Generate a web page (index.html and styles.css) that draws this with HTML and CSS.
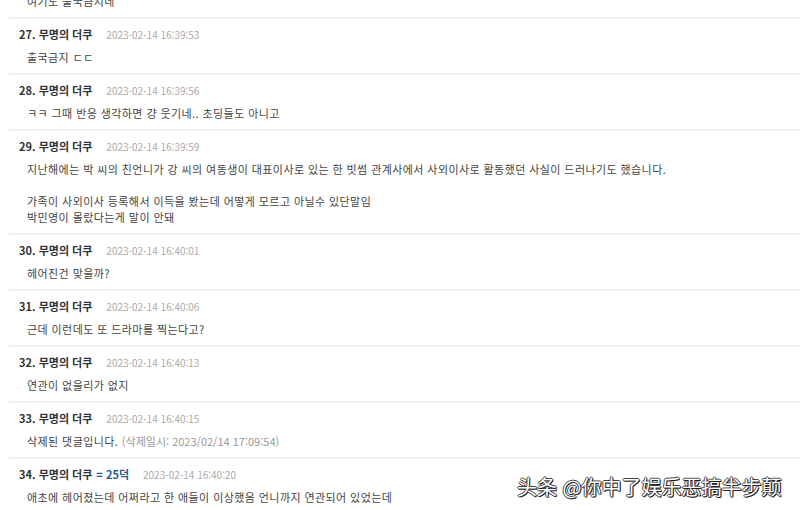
FILE: index.html
```html
<!DOCTYPE html>
<html lang="ko">

<head>
    <meta charset="UTF-8">
    <meta name="viewport" content="width=device-width, initial-scale=1.0">
    <title>댓글</title>
    <link rel="stylesheet" href="styles.css">
</head>

<body>
    <ul class="comments">
        <li class="comment first">
            <p class="text">여기도 출국금지네</p>
        </li>
        <li class="comment">
            <div class="meta"><span class="name">27. 무명의 더쿠</span><span class="date">2023-02-14 16:39:53</span></div>
            <p class="text">출국금지 ㄷㄷ</p>
        </li>
        <li class="comment">
            <div class="meta"><span class="name">28. 무명의 더쿠</span><span class="date">2023-02-14 16:39:56</span></div>
            <p class="text">ㅋㅋ 그때 반응 생각하면 걍 웃기네.. 초딩들도 아니고</p>
        </li>
        <li class="comment">
            <div class="meta"><span class="name">29. 무명의 더쿠</span><span class="date">2023-02-14 16:39:59</span></div>
            <p class="text">지난해에는 박 씨의 친언니가 강 씨의 여동생이 대표이사로 있는 한 빗썸 관계사에서 사외이사로 활동했던 사실이 드러나기도 했습니다.<br><br>가족이 사외이사 등록해서 이득을 봤는데 어떻게 모르고 아닐수 있단말임<br>박민영이 몰랐다는게 말이 안돼</p>
        </li>
        <li class="comment">
            <div class="meta"><span class="name">30. 무명의 더쿠</span><span class="date">2023-02-14 16:40:01</span></div>
            <p class="text">헤어진건 맞을까?</p>
        </li>
        <li class="comment">
            <div class="meta"><span class="name">31. 무명의 더쿠</span><span class="date">2023-02-14 16:40:06</span></div>
            <p class="text">근데 이런데도 또 드라마를 찍는다고?</p>
        </li>
        <li class="comment">
            <div class="meta"><span class="name">32. 무명의 더쿠</span><span class="date">2023-02-14 16:40:13</span></div>
            <p class="text">연관이 없을리가 없지</p>
        </li>
        <li class="comment">
            <div class="meta"><span class="name">33. 무명의 더쿠</span><span class="date">2023-02-14 16:40:15</span></div>
            <p class="text">삭제된 댓글입니다. <span class="deleted">(삭제일시: 2023/02/14 17:09:54)</span></p>
        </li>
        <li class="comment">
            <div class="meta"><span class="name">34. 무명의 더쿠</span><span class="reply">= 25덕</span><span class="date">2023-02-14 16:40:20</span></div>
            <p class="text">애초에 헤어졌는데 어쩌라고 한 애들이 이상했음 언니까지 연관되어 있었는데</p>
        </li>
    </ul>
    <div class="watermark">头条 @你中了娱乐恶搞半步颠</div>
</body>

</html>
```

FILE: styles.css
```css
body {
    margin: 0;
    background: #fff;
    font-family: "Noto Sans CJK KR", "Noto Sans", sans-serif;
    color: #333;
    overflow: hidden;
}

.comments {
    list-style: none;
    margin: -7px 0 0 9px;
    padding: 0;
}

.comment {
    border-top: 2px solid #f2f2f2;
    padding: 7px 0 8px 0;
}

.comment.first {
    border-top: none;
    padding-top: 0;
}

.meta {
    padding-left: 10px;
    height: 16px;
    line-height: 16px;
    margin-bottom: 7px;
    display: flex;
    align-items: baseline;
}

.name {
    font-size: 11px;
    font-weight: bold;
    color: #333;
}

.reply {
    font-size: 11px;
    font-weight: bold;
    color: #2b5a8c;
    margin-left: 4px;
}

.date {
    font-size: 10px;
    color: #aaa;
    margin-left: 14px;
}

.text {
    margin: 0;
    padding-left: 18px;
    font-size: 11px;
    line-height: 16px;
    letter-spacing: 0.42px;
    color: #444;
}

.deleted {
    color: #999;
    letter-spacing: 0;
}

.watermark {
    position: absolute;
    left: 517px;
    top: 472px;
    font-family: "Noto Sans CJK SC", sans-serif;
    font-size: 20px;
    color: #fff;
    text-shadow: 1px 1px 0 #222, -1px 0 0 #444, 0 -1px 0 #444, 1px 0 0 #444, 0 1px 0 #444;
    white-space: nowrap;
}
```
